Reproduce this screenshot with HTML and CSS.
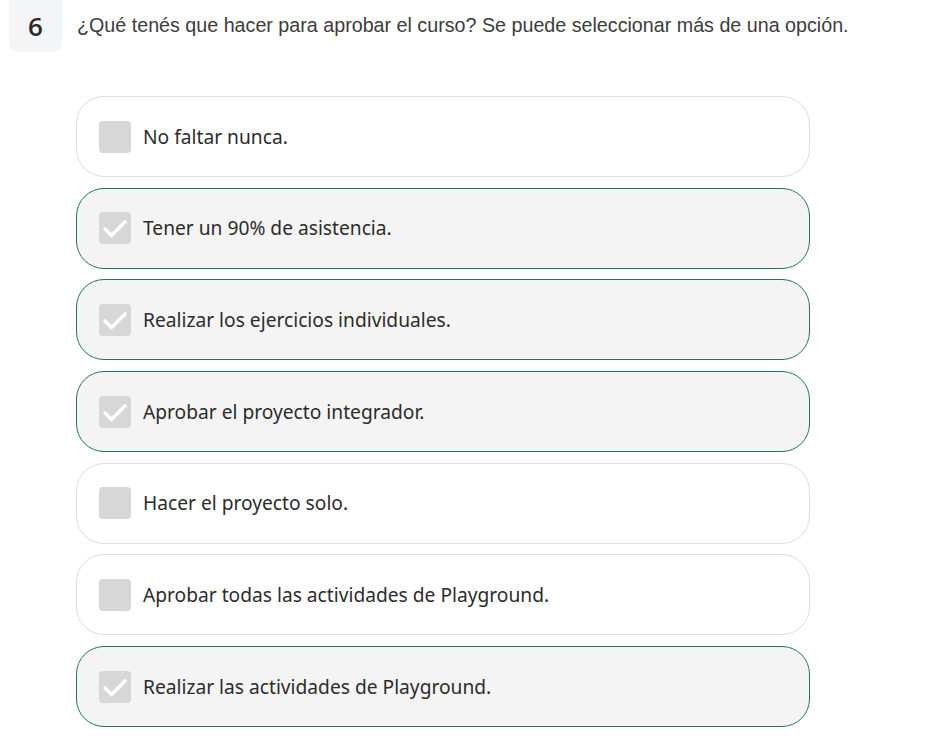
FILE: index.html
```html
<!DOCTYPE html>
<html lang="es">
<head>
<meta charset="utf-8">
<link rel="stylesheet" href="styles.css">
</head>
<body>
<div class="question">
  <div class="qhead">
    <div class="num">6</div>
    <p class="qtext">¿Qué tenés que hacer para aprobar el curso? Se puede seleccionar más de una opción.</p>
  </div>
  <ul class="options">
    <li class="opt"><span class="box"></span><span class="label">No faltar nunca.</span></li>
    <li class="opt checked"><span class="box"><svg viewBox="0 0 32 32" width="32" height="32"><path d="M6 17 L12.5 23.5 L26 10" fill="none" stroke="#fff" stroke-width="3.6" stroke-linecap="round" stroke-linejoin="round"/></svg></span><span class="label">Tener un 90% de asistencia.</span></li>
    <li class="opt checked"><span class="box"><svg viewBox="0 0 32 32" width="32" height="32"><path d="M6 17 L12.5 23.5 L26 10" fill="none" stroke="#fff" stroke-width="3.6" stroke-linecap="round" stroke-linejoin="round"/></svg></span><span class="label">Realizar los ejercicios individuales.</span></li>
    <li class="opt checked"><span class="box"><svg viewBox="0 0 32 32" width="32" height="32"><path d="M6 17 L12.5 23.5 L26 10" fill="none" stroke="#fff" stroke-width="3.6" stroke-linecap="round" stroke-linejoin="round"/></svg></span><span class="label">Aprobar el proyecto integrador.</span></li>
    <li class="opt"><span class="box"></span><span class="label">Hacer el proyecto solo.</span></li>
    <li class="opt"><span class="box"></span><span class="label">Aprobar todas las actividades de Playground.</span></li>
    <li class="opt checked"><span class="box"><svg viewBox="0 0 32 32" width="32" height="32"><path d="M6 17 L12.5 23.5 L26 10" fill="none" stroke="#fff" stroke-width="3.6" stroke-linecap="round" stroke-linejoin="round"/></svg></span><span class="label">Realizar las actividades de Playground.</span></li>
  </ul>
</div>
</body>
</html>
```
FILE: styles.css
```css
html, body {
  margin: 0;
  padding: 0;
  background: #fff;
}
.question {
  padding: 0 0 0 9px;
}
.qhead {
  display: flex;
  align-items: flex-start;
  gap: 15px;
}
.num {
  width: 53px;
  height: 60px;
  margin-top: -8px;
  padding-top: 8px;
  box-sizing: border-box;
  background: #f4f5f7;
  border-radius: 9px;
  display: flex;
  align-items: center;
  justify-content: center;
  font-family: "Open Sans", "Noto Sans", sans-serif;
  font-weight: 600;
  font-size: 26px;
  color: #2a2a2a;
}
.qtext {
  margin: 13px 0 0;
  font-family: "Liberation Sans", Arial, sans-serif;
  font-size: 19.7px;
  color: #3c3c3c;
  line-height: 24px;
}
.options {
  list-style: none;
  margin: 44px 0 0 67px;
  padding: 0;
  width: 734px;
  display: flex;
  flex-direction: column;
  gap: 10.7px;
}
.opt {
  height: 81px;
  box-sizing: border-box;
  border: 1px solid #dcdcdc;
  border-radius: 28px;
  background: #fff;
  display: flex;
  align-items: center;
  padding-left: 22px;
  gap: 12px;
}
.opt.checked {
  border-color: #1f7a4f;
  background: #f4f4f4;
}
.box {
  width: 32px;
  height: 32px;
  border-radius: 4px;
  background: #d7d7d7;
  flex: none;
  display: block;
}
.box svg {
  display: block;
}
.label {
  font-family: "Noto Sans", sans-serif;
  font-size: 19.2px;
  color: #2c2c2c;
  line-height: 24px;
}
```
